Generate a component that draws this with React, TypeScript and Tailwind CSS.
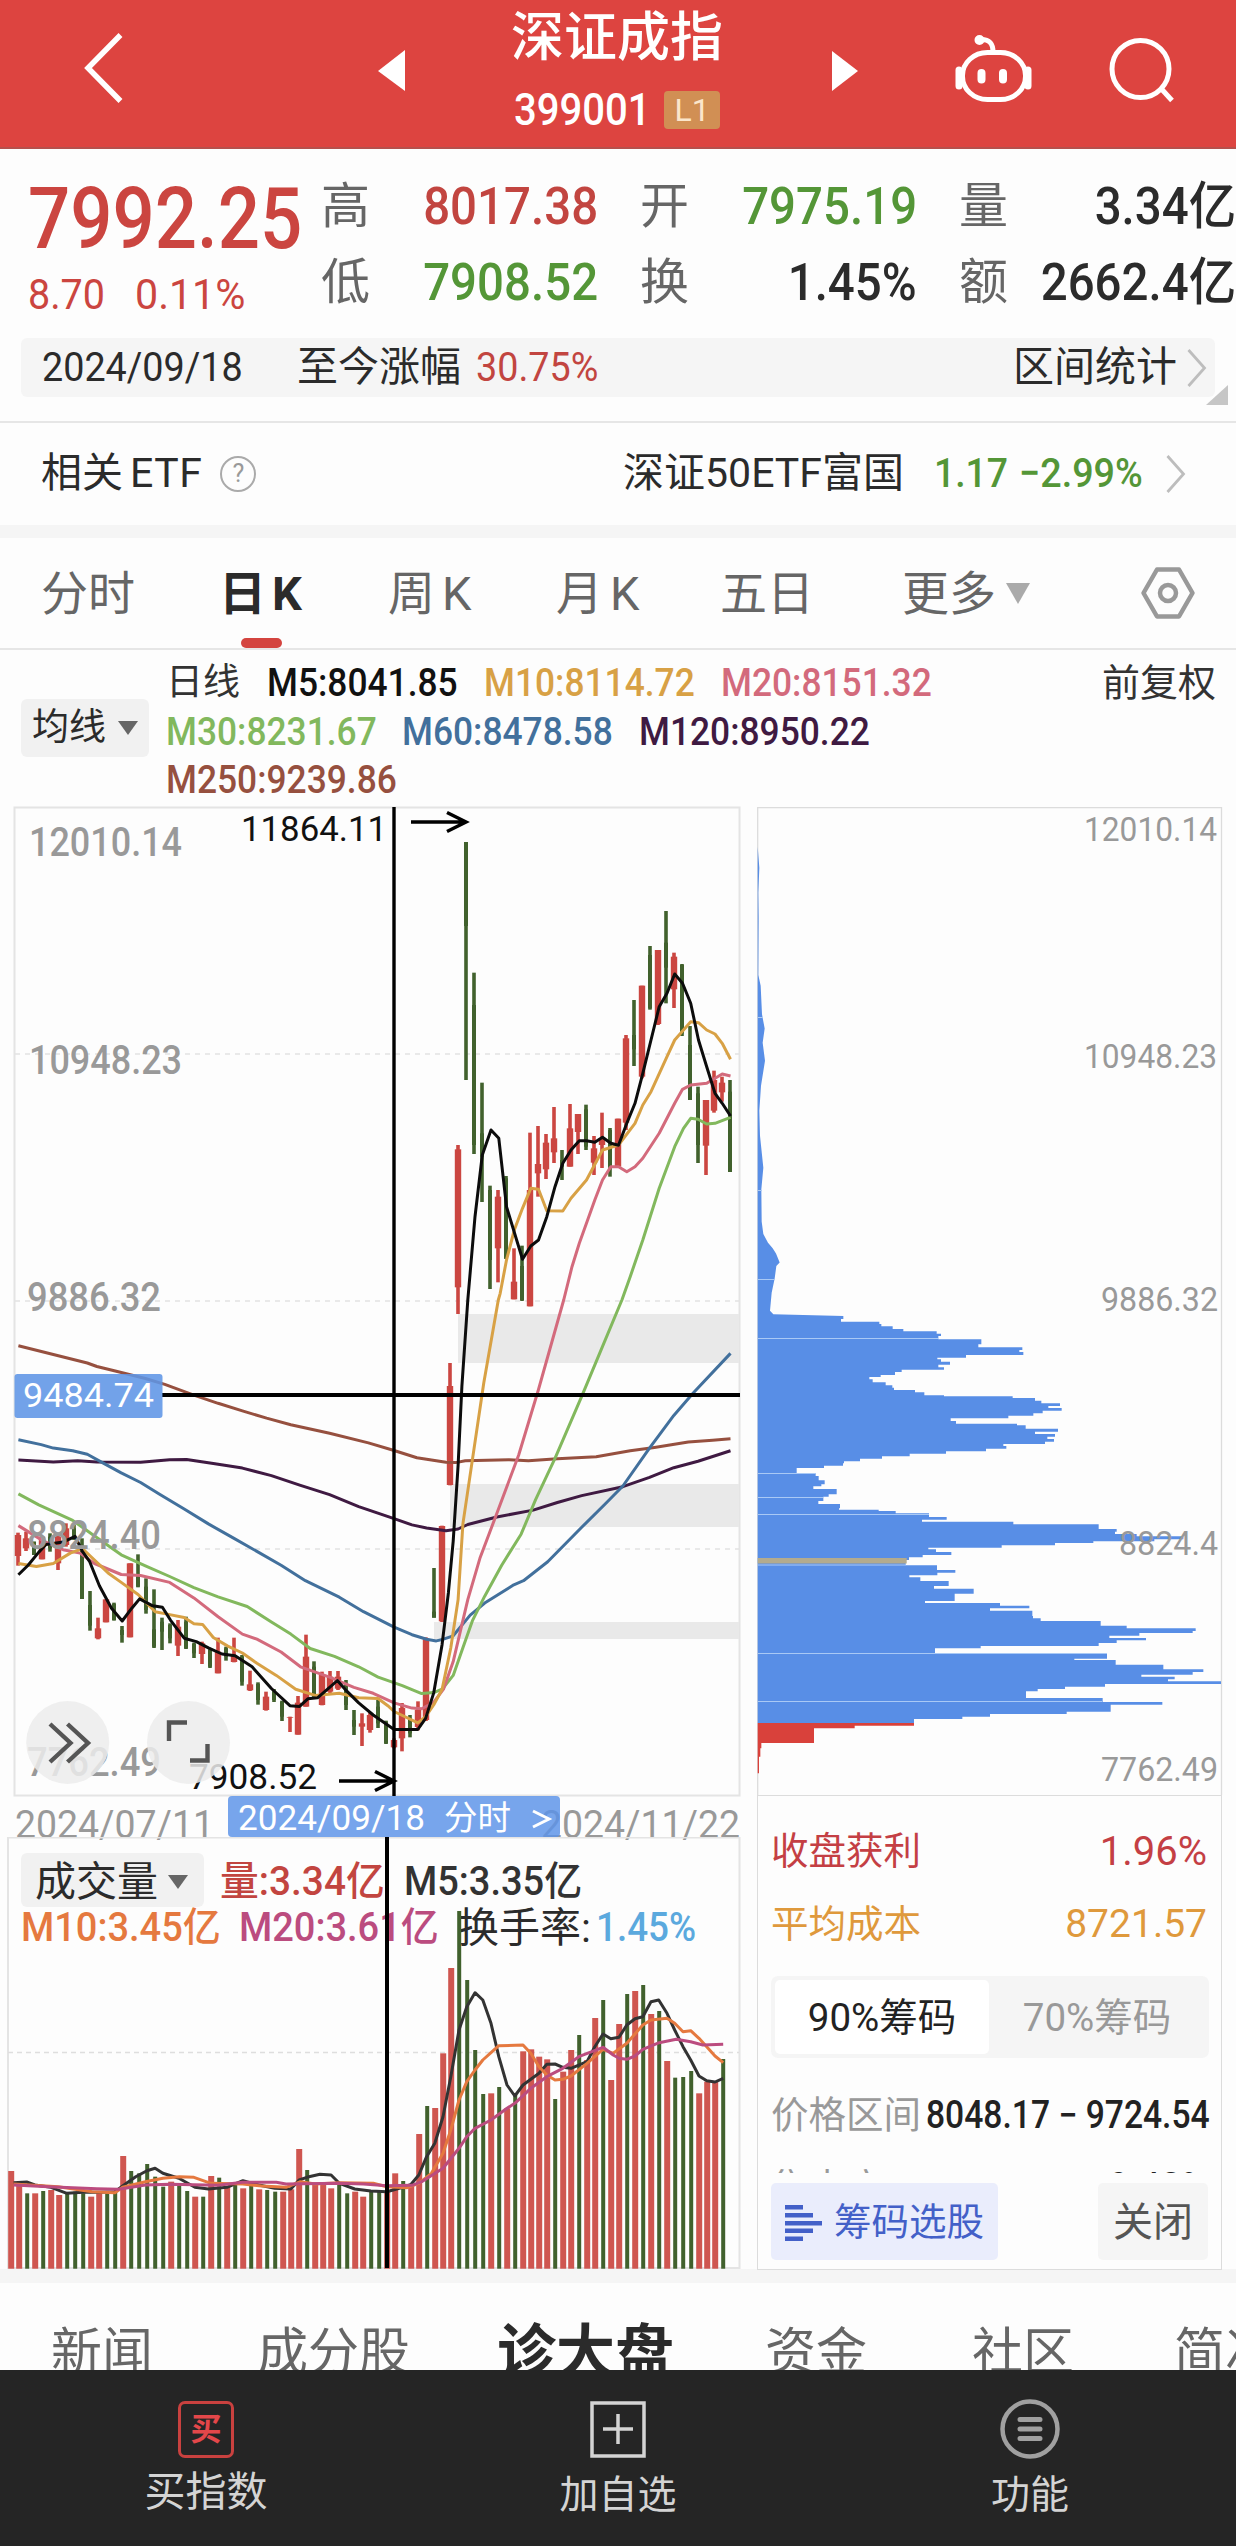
import React from 'react';

type Pt = [number, number];

const RED = '#cb4641';
const GREEN = '#41612d';

/* high, low, bodyTop, bodyBottom, up(1)/down(0); y in thirds of a pixel below y=900 */
const candles: number[][] = [
  [1898, 1997, 1905, 1968, 1], [1895, 1953, 1915, 1945, 1], [1925, 1965, 1925, 1965, 0], [1910, 1978, 1910, 1978, 1],
  [1900, 1955, 1910, 1945, 0], [1905, 2010, 1910, 1990, 1], [1870, 1940, 1885, 1935, 1], [1875, 1920, 1885, 1915, 0],
  [1915, 2097, 1935, 2097, 0], [2073, 2192, 2115, 2177, 0], [2153, 2218, 2185, 2215, 1], [2098, 2167, 2098, 2167, 1],
  [2108, 2162, 2112, 2160, 0], [2178, 2228, 2190, 2205, 0], [1990, 2212, 1990, 2212, 1], [1963, 2062, 2030, 2060, 0],
  [2035, 2141, 2060, 2130, 0], [2068, 2244, 2188, 2240, 0], [2153, 2250, 2165, 2195, 0], [2170, 2230, 2175, 2215, 0],
  [2160, 2268, 2180, 2237, 1], [2150, 2247, 2165, 2245, 0], [2228, 2274, 2232, 2260, 0], [2225, 2292, 2230, 2262, 1],
  [2247, 2304, 2250, 2300, 0], [2213, 2320, 2255, 2320, 1], [2240, 2282, 2245, 2270, 0], [2213, 2287, 2268, 2286, 1],
  [2265, 2357, 2270, 2345, 0], [2312, 2373, 2353, 2371, 1], [2347, 2414, 2352, 2400, 0], [2375, 2432, 2390, 2430, 1],
  [2367, 2406, 2375, 2400, 0], [2402, 2463, 2405, 2450, 0], [2450, 2496, 2452, 2454, 1], [2388, 2504, 2408, 2504, 1],
  [2204, 2420, 2270, 2420, 1], [2284, 2395, 2300, 2390, 0], [2315, 2416, 2325, 2415, 1], [2313, 2380, 2330, 2375, 1],
  [2313, 2370, 2330, 2366, 1], [2340, 2430, 2350, 2415, 0], [2430, 2505, 2460, 2480, 0], [2440, 2538, 2470, 2480, 1],
  [2438, 2498, 2445, 2490, 1], [2400, 2484, 2420, 2470, 0], [2462, 2532, 2465, 2530, 0], [2515, 2545, 2520, 2542, 1],
  [2409, 2554, 2424, 2515, 1], [2445, 2512, 2455, 2500, 0], [2404, 2491, 2429, 2481, 1], [2212, 2463, 2216, 2460, 1],
  [2004, 2153, 2135, 2153, 0], [1877, 2166, 1878, 2164, 1], [1389, 1756, 1458, 1755, 1], [735, 1242, 748, 1162, 1],
  [-174, 540, -174, 78, 0], [218, 762, 315, 735, 0], [548, 906, 700, 770, 0], [857, 1167, 870, 1080, 0],
  [870, 1147, 890, 1045, 1], [828, 1077, 835, 1075, 0], [1045, 1198, 1145, 1198, 1], [1037, 1203, 1098, 1200, 0],
  [698, 1219, 870, 1219, 1], [678, 890, 792, 820, 1], [702, 837, 728, 808, 1], [621, 789, 715, 757, 1],
  [750, 840, 780, 800, 0], [612, 800, 685, 800, 1], [642, 762, 642, 696, 1], [614, 750, 628, 740, 0],
  [708, 825, 745, 788, 1], [638, 804, 715, 735, 1], [684, 830, 690, 800, 0], [656, 802, 656, 800, 1],
  [405, 690, 415, 668, 1], [300, 498, 405, 448, 0], [257, 535, 257, 530, 1], [138, 329, 165, 325, 0],
  [150, 375, 150, 372, 1], [33, 310, 128, 203, 0], [158, 324, 170, 268, 1], [192, 408, 195, 400, 0],
  [378, 600, 435, 600, 0], [560, 789, 580, 735, 0], [600, 825, 600, 737, 1], [512, 638, 540, 632, 1],
  [530, 605, 548, 577, 1], [540, 816, 575, 816, 0],
];

const pairs = (s: string): Pt[] => s.trim().split(/\s+/).map((p) => p.split(',').map(Number) as Pt);
const line = (low: string, high?: string) => {
  const pts = pairs(low).map(([x, y]) => [x / 2.063, 1300 + y / 2.9037]);
  if (high) pts.push(...pairs(high).map(([x, y]) => [x / 2.063, 800 + y / 3]));
  return pts.map(([x, y]) => `${x.toFixed(1)},${y.toFixed(1)}`).join(' ');
};

const averages = [
  { color: '#96503f', points: line('38,133 180,183 200,193 240,207 300,228 340,245 400,276 450,300 500,322 550,343 600,362 680,387 760,415 813,437 860,458 920,471 940,472 960,467 1050,464 1090,467 1150,461 1230,455 1300,438 1350,428 1420,412 1470,407 1507,403') },
  { color: '#3f1a42', points: line('38,465 110,470 160,467 200,470 290,471 350,464 385,463 440,475 500,488 560,510 620,538 680,565 740,600 813,635 850,653 880,662 920,670 945,665 965,652 1025,630 1100,610 1150,588 1200,568 1285,542 1340,515 1390,487 1440,468 1507,438') },
  { color: '#42709c', points: line('38,406 85,420 110,430 150,438 180,448 215,475 250,502 290,530 330,565 380,607 430,650 480,690 530,730 580,770 630,815 700,863 750,905 813,950 850,972 880,985 900,990 915,985 935,975 970,915 1000,880 1060,827 1080,815 1130,760 1200,660 1250,590 1285,540 1340,430 1390,335 1430,270 1507,155') },
  { color: '#82b85d', points: line('38,563 80,595 150,640 190,680 250,740 300,772 350,803 400,835 450,862 510,890 560,935 600,970 640,1012 690,1035 740,1065 780,1095 830,1120 870,1143 895,1140 912,1130 935,1090 955,1010 975,930 1000,860 1035,770 1075,680 1105,580 1145,460 1200,280 1240,145 1283,0', '1300,1430 1326,1320 1360,1165 1392,1040 1410,985 1425,955 1440,958 1458,972 1475,970 1507,952') },
  { color: '#d36a7c', points: line('38,655 90,700 130,725 165,735 195,765 250,797 290,800 350,820 400,865 450,920 500,970 530,985 580,1022 620,1065 680,1095 730,1125 770,1142 813,1170 850,1185 870,1187 895,1168 915,1130 935,1050 950,960 965,870 990,750 1025,620 1070,450 1111,260 1163,0', '1180,1400 1195,1330 1227,1200 1243,1140 1260,1100 1276,1100 1293,1115 1310,1100 1326,1075 1360,1000 1392,910 1408,868 1425,855 1458,850 1490,822 1507,828') },
  { color: '#d8a145', points: line('38,765 75,774 110,765 145,735 170,722 195,755 225,795 250,820 285,855 320,905 345,912 380,922 400,940 418,942 440,980 470,1005 500,1025 530,1055 570,1090 610,1130 650,1148 700,1142 740,1155 780,1157 800,1178 813,1195 862,1228 878,1210 895,1175 912,1130 930,1010 945,870 955,650 975,460 998,240 1028,0', '1032,1480 1045,1380 1061,1290 1078,1225 1095,1165 1111,1168 1128,1232 1161,1233 1178,1195 1210,1140 1243,1050 1276,1035 1310,970 1326,915 1343,875 1376,770 1392,720 1410,690 1425,665 1441,668 1458,690 1475,702 1490,730 1507,778') },
  { color: '#0c0c0c', points: line('38,798 58,770 80,732 95,710 130,703 155,686 170,730 185,760 205,830 230,895 252,932 272,895 288,868 315,888 335,892 352,930 380,982 405,992 430,1010 458,1028 485,1033 520,1065 560,1128 598,1178 618,1180 635,1158 655,1155 680,1125 696,1105 715,1135 740,1170 770,1205 813,1247 862,1247 878,1215 895,1140 912,1000 925,850 935,700 945,480 953,250 965,0', '980,1250 995,1065 1013,990 1029,1015 1045,1220 1078,1378 1095,1338 1111,1320 1128,1250 1145,1160 1161,1090 1178,1050 1195,1022 1210,1022 1227,1027 1243,1012 1260,1030 1276,1036 1293,970 1310,910 1326,820 1343,720 1360,620 1376,580 1392,522 1408,550 1425,610 1441,720 1458,800 1475,880 1490,910 1507,948') },
];

/* bar tops; r = up day, g = down day */
const volumes =
  '1173r 1210r 1240g 1240r 1233g 1230r 1245r 1240g 1235g 1240g 1250r 1240r 1240g 1235g 1128r 1173g 1180g 1152g 1190g 1220g 1205r 1215g 1233g 1250r 1250g 1188r 1193g 1220r 1215g 1225r 1215g 1228r 1230g 1235g 1235r 1228r 1107r 1170g 1212r 1212r 1225r 1215g 1240g 1235r 1250r 1235g 1235g 1235r 1180r 1203g 1215r 1062r 978g 984r 820r 564r 393g 600g 810g 942g 940r 921g 985r 945g 814r 808r 830r 838r 957g 875r 810r 765g 840r 714r 660g 900r 732r 642g 633r 615g 702r 693g 843r 893g 891g 873g 940r 905r 905r 837g'.split(' ');

const volLine = (s: string) => pairs(s).map(([x, y]) => `${(x / 2.063).toFixed(1)},${(1780 + y / 3).toFixed(1)}`).join(' ');
const volumeLines = [
  { color: '#333333', points: volLine('28,1208 55,1206 72,1215 105,1222 138,1240 171,1237 204,1237 237,1235 253,1218 280,1190 303,1172 320,1165 336,1180 369,1195 402,1222 430,1227 468,1222 501,1202 534,1215 567,1225 600,1227 617,1200 633,1192 660,1183 683,1185 700,1210 732,1227 765,1233 798,1235 831,1222 848,1213 864,1185 880,1130 897,1090 914,1010 930,890 947,750 963,680 980,638 996,660 1013,730 1029,830 1046,915 1062,948 1079,915 1112,880 1128,853 1145,852 1161,862 1178,865 1211,845 1227,800 1244,762 1260,776 1277,772 1293,735 1310,716 1326,710 1343,665 1359,660 1376,700 1392,750 1409,800 1425,840 1442,888 1458,902 1475,906 1492,895') },
  { color: '#e5793f', points: volLine('28,1212 120,1220 190,1235 237,1238 253,1222 300,1205 336,1195 370,1190 400,1192 435,1210 501,1212 540,1218 590,1222 620,1205 650,1212 700,1208 770,1210 798,1220 840,1223 864,1210 890,1180 914,1120 930,1050 947,960 963,905 980,870 996,840 1013,818 1029,797 1079,795 1095,820 1112,860 1128,885 1145,900 1161,898 1178,888 1211,850 1244,808 1265,820 1293,790 1326,735 1343,720 1376,715 1392,730 1409,755 1425,752 1442,775 1458,800 1475,828 1492,848') },
  { color: '#bb4c7f', points: volLine('28,1215 100,1220 200,1226 245,1228 300,1215 350,1213 450,1216 500,1207 570,1207 590,1212 700,1210 750,1212 798,1217 850,1216 870,1205 914,1165 947,1105 963,1070 980,1045 1013,1020 1046,985 1062,970 1095,925 1128,890 1161,865 1194,830 1244,802 1265,825 1277,835 1293,838 1310,828 1326,808 1360,788 1395,778 1425,785 1450,795 1492,793') },
];

const chipHead = '130,53 190,58 260,55 330,56 490,55 520,62 600,66 640,74 680,68 730,75 800,63 870,58 940,60 1030,70 1090,64 1180,65 1215,70 1240,84 1255,98 1270,108 1295,119 1305,109 1340,104 1380,95 1430,90 1440,100';
/* y where each price step starts, and its extent */
const chipSteps =
  '48,310 57,303 65,418 72,424 79,458 87,490 94,590 101,603 108,595 118,724 133,715 142,847 150,838 156,850 165,678 173,592 178,603 185,630 194,595 202,612 209,485 216,465 225,422 231,388 238,398 247,437 256,457 263,462 270,525 277,553 286,612 289,818 294,885 302,904 310,960 318,925 324,965 332,908 340,880 347,805 355,632 363,648 371,831 376,857 386,954 395,885 402,945 410,922 417,942 425,915 432,790 438,799 446,738 454,618 461,509 469,426 476,360 484,312 490,309 497,252 504,170 520,227 528,236 541,254 553,244 559,220 567,290 583,266 590,250 603,235 612,300 625,297 629,416 633,467 640,567 651,620 659,546 665,820 673,1076 687,1130 695,1125 702,1190 709,1330 718,1243 724,1060 729,945 736,785 743,565 748,588 756,634 765,548 772,507 780,497 796,591 810,646 818,592 826,508 832,541 843,626 858,582 866,701 881,644 903,555 909,780 917,868 925,750 932,877 948,879 955,902 963,1082 977,1160 985,1367 993,1358 999,1198 1007,1108 1014,1218 1021,1130 1029,1076 1038,722 1045,585 1061,1101 1076,1003 1080,1127 1094,1270 1108,1390 1116,1358 1124,1204 1130,1304 1138,1284 1144,1443 1152,1095 1160,975 1167,893 1174,858 1194,1088 1206,1267 1214,1112 1235,980 1242,750 1250,667 1257,522';
const redSteps = '1269,522 1277,344 1285,222 1329,64 1345,61 1370,57';
const stepPath = (s: string, end: number) => {
  const st = pairs(s);
  let d = '';
  st.forEach(([y, x], i) => {
    const next = i + 1 < st.length ? st[i + 1][0] : end;
    d += `L${740 + x / 3} ${1300 + y / 3}L${740 + x / 3} ${1300 + next / 3}`;
  });
  return d + `L757.7 ${1300 + end / 3}Z`;
};
const bluePath =
  'M757.7 846' + pairs(chipHead).map(([y, x]) => `L${740 + x / 3} ${800 + y / 2.8}`).join('') + stepPath(chipSteps, 1269);
const redPath = 'M757.7 1723' + stepPath(redSteps, 1420);

function Fit({ x, y, w, size, fill, weight, children }: { x: number; y: number; w: number; size: number; fill: string; weight?: number; children: string }) {
  return (
    <text x={x} y={y} textLength={w} lengthAdjust="spacingAndGlyphs" fontSize={size} fill={fill} fontWeight={weight ?? 400}>
      {children}
    </text>
  );
}

function PriceChart() {
  return (
    <svg className="block overflow-visible" width="748" height="1030" viewBox="0 807 748 1030">
      <rect x="14.5" y="807.5" width="725" height="988" fill="none" stroke="#e4e4e4" strokeWidth="2" />
      <g fill="#e9e9e9">
        <rect x="458" y="1314" width="281" height="49" />
        <rect x="450" y="1484" width="289" height="43" />
        <rect x="434" y="1622" width="305" height="17" />
      </g>
      <g stroke="#e2e2e2" strokeWidth="1.5" strokeDasharray="5 5">
        <path d="M15 1054H739M15 1301H739M15 1549H739" />
      </g>
      {candles.map(([h, l, t, b, up], i) => {
        const x = 18 + 8 * i;
        const c = up ? RED : GREEN;
        return (
          <g key={i} fill={c}>
            <rect x={x - 1.8} y={900 + h / 3} width={3.6} height={(l - h) / 3} />
            <rect x={x - (up ? 3.2 : 2)} y={900 + t / 3} width={up ? 6.4 : 4} height={(b - t) / 3} />
          </g>
        );
      })}
      <g fill="none" strokeWidth="3" strokeLinejoin="round">
        {averages.map((a) => (
          <polyline key={a.color} points={a.points} stroke={a.color} />
        ))}
      </g>
      <g>
        <Fit x={29} y={856} w={153} size={40.5} fill="#999" weight={500}>12010.14</Fit>
        <Fit x={29} y={1074} w={153} size={40.5} fill="#999" weight={500}>10948.23</Fit>
        <Fit x={27} y={1311} w={134} size={40.5} fill="#999" weight={500}>9886.32</Fit>
        <Fit x={27} y={1548.5} w={134} size={40.5} fill="#999" weight={500}>8824.40</Fit>
        <Fit x={27} y={1775.5} w={134} size={40.5} fill="#999" weight={500}>7762.49</Fit>
      </g>
      <Fit x={241} y={841} w={146} size={35} fill="#111">11864.11</Fit>
      <path d="M411 822H466M447 812.500L466 822L447 831.500" fill="none" stroke="#000" strokeWidth="3.500" />
      <Fit x={189} y={1789} w={128} size={35} fill="#111">7908.52</Fit>
      <path d="M339 1781H393M375 1771.500L394 1781L375 1790.500" fill="none" stroke="#000" strokeWidth="3.500" />
      <path d="M394 807V1796" stroke="#000" strokeWidth="3.400" />
      <path d="M162 1395H740" stroke="#000" strokeWidth="3.800" />
      <rect x="14.500" y="1374" width="148" height="44" rx="3" fill="#5f95e6" fillOpacity="0.88" />
      <Fit x={23} y={1407} w={131} size={34} fill="#fff">9484.74</Fit>
      <g fill="#ececec" fillOpacity="0.85">
        <circle cx="67.700" cy="1742.500" r="41.500" />
        <circle cx="188.500" cy="1742.500" r="41.500" />
      </g>
      <path d="M50 1724L70.500 1743L50 1762M67.500 1724L88 1743L67.500 1762M169 1741V1722.500H187M207.500 1744V1760.500H190" fill="none" stroke="#555" strokeWidth="4.400" />
      <Fit x={15} y={1838} w={199} size={38.500} fill="#999">2024/07/11</Fit>
      <Fit x={541} y={1838} w={199} size={38.500} fill="#999">2024/11/22</Fit>
      <rect x="228" y="1796" width="332" height="41" rx="4" fill="#5b93e8" fillOpacity="0.83" />
      <Fit x={238} y={1830} w={187} size={35} fill="#fff">2024/09/18</Fit>
      <Fit x={444} y={1830} w={67} size={34} fill="#fff">分时</Fit>
      <path d="M533 1811L549 1819L533 1827" fill="none" stroke="#fff" strokeWidth="3" />
    </svg>
  );
}

function VolumeChart() {
  return (
    <svg className="absolute inset-0" width="748" height="432" viewBox="0 1837 748 432">
      <path d="M8 1837.500H739.500V2268H8Z" fill="none" stroke="#e4e4e4" strokeWidth="2" />
      <path d="M8 2052.500H739" stroke="#dedede" strokeWidth="1.500" strokeDasharray="5 4" />
      {volumes.map((v, i) => {
        const up = v.endsWith('r');
        const y = 1780 + parseInt(v, 10) / 3;
        return <rect key={i} x={11.2 + 8 * i - (up ? 3 : 2)} y={y} width={up ? 6 : 4} height={2268.7 - y} fill={up ? '#cf5650' : GREEN} />;
      })}
      <g fill="none" strokeWidth="3" strokeLinejoin="round">
        {volumeLines.map((a) => (
          <polyline key={a.color} points={a.points} stroke={a.color} />
        ))}
      </g>
      <path d="M387 1837V2268" stroke="#000" strokeWidth="4" />
    </svg>
  );
}

function ChipChart() {
  return (
    <svg className="block" width="488" height="988" viewBox="748 807 488 988">
      <path d="M757.700 1796V807.500H1221.500V1796" fill="none" stroke="#dcdcdc" strokeWidth="1.300" />
      <path d={bluePath} fill="#588ee6" />
      <path d={redPath} fill="#d9413b" />
      <rect x="757.700" y="1558" width="149" height="5.500" fill="#b3ab8e" />
      <path d="M758 1017.500H763M758 1190.500H762M758 1279.500H774M758 1338.500H938M758 1473.500H816M758 1497.500H823M758 1514.500H929M758 1565H906M758 1653.500H1107M758 1701.500H1102" stroke="#a9c9f5" strokeWidth="1" />
      <g>
        <Fit x={1084} y={841} w={133} size={33} fill="#999">12010.14</Fit>
        <Fit x={1084} y={1067.5} w={133} size={33} fill="#999">10948.23</Fit>
        <Fit x={1101} y={1311} w={117} size={33} fill="#999">9886.32</Fit>
        <Fit x={1119} y={1555} w={99} size={33} fill="#999">8824.4</Fit>
        <Fit x={1101} y={1780.5} w={117} size={33} fill="#999">7762.49</Fit>
      </g>
    </svg>
  );
}

const Chevron = ({ className = '' }: { className?: string }) => (
  <svg className={className} width="20" height="38" viewBox="0 0 20 38" fill="none" stroke="#bdbdbd" strokeWidth="2.800">
    <path d="M1.500 1L17.500 19L1.500 37" />
  </svg>
);

function Header() {
  return (
    <header className="flex h-[149px] border-b-2 border-[#b5504c] bg-[#dd4440] text-white">
      <svg className="ml-[80px] mt-[30px]" width="46" height="76" viewBox="0 0 46 76" fill="none" stroke="#fff" strokeWidth="5.500">
        <path d="M40.500 5L8 38L40.500 71" />
      </svg>
      <svg className="ml-[252px] mt-[50px]" width="28" height="42" viewBox="0 0 28 42" fill="#fff"><path d="M0 21L27 0V41Z" /></svg>
      <div className="ml-[78px] flex w-[266px] flex-col items-center">
        <h1 className="h-[78px] text-[53px] font-medium leading-[76px] whitespace-nowrap">深证成指</h1>
        <div className="flex h-[64px] items-center gap-[14px]">
          <span className="w-[136px] text-[45px] font-medium leading-[64px]"><span className="inline-block origin-left scale-x-[0.89]">399001</span></span>
          <span className="flex h-[38px] w-[56px] items-center justify-center rounded-[4px] bg-[#d18f54] text-[32px] text-[#fbe6cb]">L1</span>
        </div>
      </div>
      <svg className="ml-[82px] mt-[50px]" width="26" height="42" viewBox="0 0 26 42" fill="#fff"><path d="M26 21L0 1V41Z" /></svg>
      <svg className="ml-[94px] mt-[30px]" width="84" height="78" viewBox="0 0 84 78" fill="none" stroke="#fff" strokeWidth="5">
        <rect x="10.500" y="22.500" width="63" height="47" rx="25" ry="23" />
        <path d="M28 9.500C38 9 41 14 41 22" />
        <circle cx="27.500" cy="10" r="2.500" fill="#fff" />
        <path d="M7 40V56M76 40V56" strokeWidth="7" strokeLinecap="round" />
        <path d="M29.500 43V49.500M51 43V49.500" strokeWidth="8" strokeLinecap="round" />
      </svg>
      <svg className="ml-[66px] mt-[34px]" width="76" height="74" viewBox="0 0 76 74" fill="none" stroke="#fff" strokeWidth="5">
        <circle cx="38.500" cy="35" r="28.500" />
        <path d="M59.500 55L70 66.500" />
      </svg>
    </header>
  );
}

const quotes = [
  { label: '高', value: '8017.38', tone: 'text-[#c24540]' },
  { label: '开', value: '7975.19', tone: 'text-[#549637]' },
  { label: '量', value: '3.34亿', tone: 'text-[#2b2b2b]' },
  { label: '低', value: '7908.52', tone: 'text-[#549637]' },
  { label: '换', value: '1.45%', tone: 'text-[#2b2b2b]' },
  { label: '额', value: '2662.4亿', tone: 'text-[#2b2b2b]' },
];

function Quote() {
  return (
    <section className="flex h-[189px] pt-[17px]">
      <div className="w-[321px] pl-[28px] text-[#cb4540]">
        <div className="mt-[4px] text-[85px] font-medium leading-[98px]"><span className="inline-block origin-left scale-x-[0.875]">7992.25</span></div>
        <div className="flex text-[42px] leading-[53px]">
          <span className="w-[107px]"><span className="inline-block origin-left scale-x-[0.94]">8.70</span></span>
          <span className="inline-block origin-left scale-x-[0.98]">0.11%</span>
        </div>
      </div>
      <div className="mt-[3px] grid h-[152px] w-[915px] grid-cols-[277px_42px_277px_42px_277px] text-[51px] leading-[76px] whitespace-nowrap">
        {quotes.map((q, i) => (
          <React.Fragment key={q.label}>
            <div className="flex justify-between">
              <span className="text-[49px] text-[#666]">{q.label}</span>
              <span className={`inline-block origin-right scale-x-[0.93] font-medium ${q.tone}`}>{q.value}</span>
            </div>
            {i % 3 < 2 && <span />}
          </React.Fragment>
        ))}
      </div>
    </section>
  );
}

function RangeBar() {
  return (
    <section className="relative h-[83px] px-[21px]">
      <div className="flex h-[59px] items-center rounded-[6px] bg-[#f5f5f5] pl-[21px] text-[41px] leading-[59px] whitespace-nowrap text-[#2b2b2b]">
        <span className="w-[255px]"><span className="inline-block origin-left scale-x-[0.92]">2024/09/18</span></span>
        <span className="w-[179px]">至今涨幅</span>
        <span className="inline-block origin-left scale-x-[0.92] text-[#c24540]">30.75%</span>
        <span className="ml-auto mr-[10px]">区间统计</span>
        <Chevron className="mr-[8px]" />
      </div>
      <svg className="absolute bottom-[16px] right-[8px]" width="22" height="20"><path d="M22 0V20H0Z" fill="#c6c6c6" /></svg>
    </section>
  );
}

function EtfRow() {
  return (
    <section className="flex h-[104px] items-center border-t-2 border-[#e6e6e6] pl-[41px] text-[41px] whitespace-nowrap text-[#2b2b2b]">
      <span>相关</span>
      <span className="ml-[7px] tracking-[0.500px]">ETF</span>
      <span className="ml-[18px] flex size-[36px] items-center justify-center rounded-full border-2 border-[#aaa] text-[25px] text-[#999]">?</span>
      <span className="ml-auto">深证50ETF富国</span>
      <span className="ml-[30px] w-[85px] text-[#549637]"><span className="inline-block origin-left scale-x-[0.91] font-medium">1.17</span></span>
      <span className="w-[126px] text-[#549637]"><span className="inline-block origin-left scale-x-[0.92] font-medium">−2.99%</span></span>
      <Chevron className="mr-[50px] ml-[21px]" />
    </section>
  );
}

function PeriodTabs() {
  return (
    <nav className="flex h-[112px] border-b-2 border-[#e6e6e6] pl-[41px] text-[47px] leading-[112px] whitespace-nowrap text-[#666]">
      <span className="w-[178px]">分时</span>
      <span className="relative w-[169px] font-bold text-[#2b2b2b]">
        日<span className="ml-[6px]">K</span>
        <i className="absolute bottom-0 left-[22px] h-[10px] w-[41px] rounded-[5px] bg-[#d4443f]" />
      </span>
      <span className="w-[168px]">周<span className="ml-[7px]">K</span></span>
      <span className="w-[164px]">月<span className="ml-[7px]">K</span></span>
      <span className="w-[182px]">五日</span>
      <span>更多</span>
      <svg className="ml-[10px] mt-[45px]" width="24" height="21" fill="#aaa"><path d="M0 0H24L12 21Z" /></svg>
      <svg className="ml-auto mr-[40px] mt-[27px]" width="56" height="56" viewBox="0 0 56 56" fill="none" stroke="#999" strokeWidth="4.500" strokeLinejoin="round">
        <path d="M17 4.500H39L52.500 28L39 51.500H17L3.500 28Z" />
        <circle cx="28" cy="28" r="8" />
      </svg>
    </nav>
  );
}

const Down = ({ c = '#666' }: { c?: string }) => (
  <svg width="20" height="14" fill={c}><path d="M0 0H20L10 14Z" /></svg>
);

const maItem = 'inline-block origin-left scale-x-[0.93] font-medium';

function MaLegend() {
  return (
    <section className="flex h-[157px] pl-[21px] text-[38px] whitespace-nowrap">
      <div className="mt-[49px] flex h-[58px] w-[128px] items-center justify-between rounded-[6px] bg-[#f1f1f1] pl-[11px] pr-[11px] text-[37px] text-[#2b2b2b]">
        均线<Down />
      </div>
      <div className="ml-[17px] mt-[9px] flex-1 leading-[48.500px]">
        <div className="flex">
          <span className="w-[101px] text-[37px] text-[#333]">日线</span>
          <span className="w-[217px] text-[#111]"><span className={maItem}>M5:8041.85</span></span>
          <span className="w-[237px] text-[#d8a145]"><span className={maItem}>M10:8114.72</span></span>
          <span className="text-[#d36a7c]"><span className={maItem}>M20:8151.32</span></span>
          <span className="ml-auto mr-[20px] text-[38px] text-[#333]">前复权</span>
        </div>
        <div className="flex">
          <span className="w-[236px] text-[#82b85d]"><span className={maItem}>M30:8231.67</span></span>
          <span className="w-[237px] text-[#42709c]"><span className={maItem}>M60:8478.58</span></span>
          <span className="text-[#3f1a42]"><span className={maItem}>M120:8950.22</span></span>
        </div>
        <div className="text-[#96503f]"><span className={maItem}>M250:9239.86</span></div>
      </div>
    </section>
  );
}

function VolumePanel() {
  return (
    <div className="relative h-[432px] whitespace-nowrap">
      <div className="pl-[21px] pt-[14px] text-[40px]">
        <div className="flex items-center leading-[54px]">
          <span className="flex h-[54px] w-[183px] items-center justify-between rounded-[6px] bg-[#f1f1f1] pl-[14px] pr-[16px] pt-[3px] text-[41px] text-[#2b2b2b]">成交量<Down /></span>
          <span className="ml-[16px] mt-[4px] w-[184px] text-[#c24540]"><span className="inline-block origin-left scale-x-[0.97] font-medium">量:3.34亿</span></span>
          <span className="mt-[4px] inline-block origin-left scale-x-[0.95] font-medium text-[#333]">M5:3.35亿</span>
        </div>
        <div className="-mt-[5px] flex leading-[48px]">
          <span className="w-[218px] text-[#e5793f]"><span className="inline-block origin-left scale-x-[0.95] font-medium">M10:3.45亿</span></span>
          <span className="w-[219px] text-[#bb4c7f]"><span className="inline-block origin-left scale-x-[0.95] font-medium">M20:3.61亿</span></span>
          <span className="w-[138px] text-[41px] text-[#2b2b2b]">换手率:</span>
          <span className="inline-block origin-left scale-x-[0.92] font-medium text-[#5ba9de]">1.45%</span>
        </div>
      </div>
      <VolumeChart />
    </div>
  );
}

function ChipPanel() {
  return (
    <div className="ml-[9px] h-[475px] w-[465px] border border-[#dcdcdc] pl-[13px] pr-[12px] text-[37.500px] whitespace-nowrap">
      <div className="mt-[19px] flex h-[73px] items-center justify-between pr-[2px] text-[#c43f44]"><span>收盘获利</span><span className="text-[40px]">1.96%</span></div>
      <div className="flex h-[73px] items-center justify-between pr-[2px] text-[#df993c]"><span>平均成本</span><span className="text-[39px]">8721.57</span></div>
      <div className="mt-[15px] flex h-[82px] rounded-[7px] bg-[#f5f5f5] p-[4px] leading-[76px]">
        <span className="w-[214px] rounded-[5px] bg-white text-center text-[38.500px] text-[#222]">90%筹码</span>
        <span className="flex-1 text-center text-[38.500px] text-[#999]">70%筹码</span>
      </div>
      <div className="mt-[21px] flex h-[72px] items-center text-[#999]">
        <span className="w-[155px] shrink-0">价格区间</span>
        <span className="inline-block w-[318px] shrink-0 origin-left scale-x-[0.885] text-[38px] font-medium text-[#222]">8048.17 − 9724.54</span>
      </div>
      <div className="mt-[17px] h-[5px] overflow-hidden">
        <div className="-mt-[3px] flex justify-between text-[#999]"><span className="leading-[46px]">集中度</span><span className="leading-[40px] text-[#222]">9.43%</span></div>
      </div>
      <div className="mt-[10px] flex justify-between pr-[1px]">
        <button className="flex h-[77px] w-[227px] items-center rounded-[5px] bg-[#eaedfc] pl-[14px] pt-[2px] text-[#4360c8]">
          <svg className="mr-[12px]" width="37" height="36" fill="#4360c8">
            <path d="M0 0H18V4.500H0ZM0 8H28V12.500H0ZM0 16H37V20.500H0ZM0 23.500H28V28H0ZM0 31.500H18V36H0Z" />
          </svg>
          筹码选股
        </button>
        <button className="h-[77px] w-[110px] rounded-[5px] bg-[#f5f5f5] pt-[3px] text-[40px] text-[#555]">关闭</button>
      </div>
    </div>
  );
}

function SectionTabs() {
  return (
    <nav className="flex h-[87px] overflow-hidden pl-[51px] pt-[33px] text-[51px] leading-[74px] whitespace-nowrap text-[#666]">
      <span className="w-[206px] shrink-0">新闻</span>
      <span className="w-[240px] shrink-0">成分股</span>
      <span className="w-[268px] shrink-0 text-[59px] font-bold text-[#2b2b2b]">诊大盘</span>
      <span className="w-[207px] shrink-0">资金</span>
      <span className="w-[202px] shrink-0">社区</span>
      <span className="shrink-0">简况</span>
    </nav>
  );
}

function BottomBar() {
  return (
    <footer className="grid h-[176px] grid-cols-3 bg-[#252525] text-center whitespace-nowrap text-[#d4d4d4]">
      <div className="flex flex-col items-center pt-[31px]">
        <span className="flex h-[57px] w-[56px] items-center justify-center rounded-[7px] border-[3.500px] border-[#c9413f] text-[31px] font-bold leading-none text-[#e3474a]">买</span>
        <span className="mt-[4px] text-[41px] leading-[60px]">买指数</span>
      </div>
      <div className="flex flex-col items-center pt-[31px]">
        <svg width="56" height="57" fill="none" stroke="#d4d4d4" strokeWidth="3.500"><path d="M2 2H54V55H2ZM28 13V43M13 28H43" /></svg>
        <span className="mt-[7px] text-[39px] leading-[60px]">加自选</span>
      </div>
      <div className="flex flex-col items-center pt-[29px]">
        <svg width="60" height="60" fill="none" stroke="#a0a0a0"><circle cx="30" cy="30" r="27.500" strokeWidth="4.500" /><path d="M20 20.500H40M20 30H40M20 39.500H40" strokeWidth="5" strokeLinecap="round" /></svg>
        <span className="mt-[6px] text-[39px] leading-[60px]">功能</span>
      </div>
    </footer>
  );
}

export default function App() {
  return (
    <main className="h-[2546px] w-[1236px] overflow-hidden bg-[#fdfdfd] font-['Roboto','Noto_Sans_CJK_SC',sans-serif]">
      <Header />
      <Quote />
      <RangeBar />
      <EtfRow />
      <div className="h-[13px] bg-[#f5f5f5]" />
      <PeriodTabs />
      <MaLegend />
      <section className="flex h-[1462px]">
        <div className="w-[748px]">
          <PriceChart />
          <VolumePanel />
        </div>
        <div className="w-[488px]">
          <ChipChart />
          <ChipPanel />
        </div>
      </section>
      <div className="h-[14px] bg-[#f5f5f5]" />
      <SectionTabs />
      <BottomBar />
    </main>
  );
}
